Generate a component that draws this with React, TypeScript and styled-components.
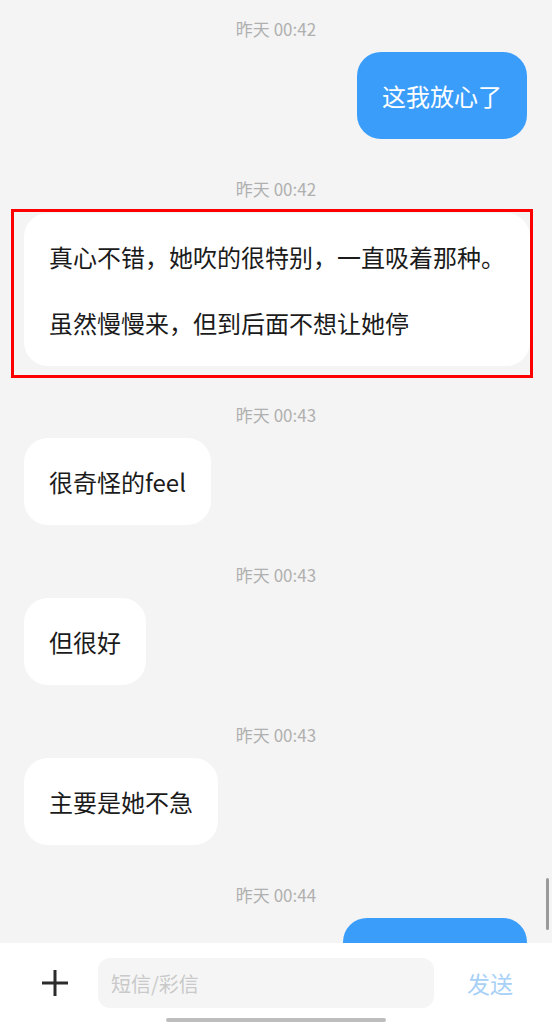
import React from "react";
import styled, { createGlobalStyle } from "styled-components";

const GlobalStyle = createGlobalStyle`
  html, body {
    margin: 0;
    padding: 0;
    background: #f4f4f4;
  }
  body {
    font-family: "Noto Sans CJK SC", "Noto Sans", sans-serif;
  }
  * { box-sizing: border-box; }
`;

const Page = styled.div`
  width: 552px;
  height: 1024px;
  display: flex;
  flex-direction: column;
  background: #f4f4f4;
  overflow: hidden;
`;

const ChatArea = styled.div`
  position: relative;
  flex: 1;
  overflow: hidden;
  display: flex;
  flex-direction: column;
  padding-top: 17px;
`;

const Group = styled.div<{ $first?: boolean }>`
  display: flex;
  flex-direction: column;
  flex-shrink: 0;
  margin-top: ${(p) => (p.$first ? "0" : "38px")};
`;

const Timestamp = styled.div`
  height: 24px;
  line-height: 24px;
  text-align: center;
  font-size: 17px;
  color: #b0b0b0;
  font-family: "Noto Sans CJK SC", "Noto Sans", sans-serif;
`;

const Row = styled.div<{ $out?: boolean }>`
  display: flex;
  justify-content: ${(p) => (p.$out ? "flex-end" : "flex-start")};
  margin-top: 11px;
  padding: 0 25px 0 24px;
`;

const Bubble = styled.div<{ $out?: boolean; $minWidth?: number }>`
  background: ${(p) => (p.$out ? "#3b9dfa" : "#ffffff")};
  color: ${(p) => (p.$out ? "#ffffff" : "#1b1b1b")};
  border-radius: 24px;
  padding: 27px 25px 27px;
  min-width: ${(p) => (p.$minWidth ? `${p.$minWidth}px` : "0")};
  min-height: 87px;
  font-size: 24px;
  line-height: 33px;
  white-space: pre;
  font-family: "Noto Sans CJK SC", "Noto Sans", sans-serif;
`;

const Highlight = styled.div`
  display: flex;
  margin: 8px 19px -13px 11px;
  padding: 1px 0 9px 10px;
  border: 3px solid #ff0000;
`;

const Scrollbar = styled.div`
  position: absolute;
  right: 3px;
  top: 878px;
  width: 3px;
  height: 52px;
  border-radius: 2px;
  background: #9a9a9a;
`;

const BottomBar = styled.div`
  height: 81px;
  flex-shrink: 0;
  background: #ffffff;
  display: flex;
  flex-direction: column;
  align-items: center;
  padding-top: 15px;
`;

const InputRow = styled.div`
  width: 100%;
  height: 50px;
  display: flex;
  align-items: center;
  padding-left: 41px;
`;

const PlusButton = styled.div`
  width: 28px;
  height: 28px;
  display: flex;
  align-items: center;
  justify-content: center;
`;

const InputBox = styled.div`
  margin-left: 29px;
  width: 336px;
  height: 50px;
  border-radius: 12px;
  background: #f5f5f5;
  display: flex;
  align-items: center;
  padding-left: 13px;
  font-size: 20px;
  color: #c9c9c9;
`;

const SendButton = styled.div`
  margin-left: 33px;
  font-size: 23px;
  color: #a8d1f7;
`;

const HomeIndicator = styled.div`
  margin-top: 10px;
  width: 220px;
  height: 4px;
  border-radius: 2px;
  background: #bdbdbd;
`;

type Msg = {
  time: string;
  text: string;
  out?: boolean;
  highlight?: boolean;
  minWidth?: number;
};

const messages: Msg[] = [
  { time: "昨天 00:42", text: "这我放心了", out: true },
  {
    time: "昨天 00:42",
    text: "真心不错，她吹的很特别，一直吸着那种。\n\n虽然慢慢来，但到后面不想让她停",
    highlight: true,
  },
  { time: "昨天 00:43", text: "很奇怪的feel" },
  { time: "昨天 00:43", text: "但很好" },
  { time: "昨天 00:43", text: "主要是她不急" },
  { time: "昨天 00:44", text: "", out: true, minWidth: 184 },
];

export default function App() {
  return (
    <Page>
      <GlobalStyle />
      <ChatArea>
        {messages.map((m, i) => (
          <Group key={i} $first={i === 0}>
            <Timestamp>{m.time}</Timestamp>
            {m.highlight ? (
              <Highlight>
                <Bubble $out={m.out}>{m.text}</Bubble>
              </Highlight>
            ) : (
              <Row $out={m.out}>
                <Bubble $out={m.out} $minWidth={m.minWidth}>
                  {m.text}
                </Bubble>
              </Row>
            )}
          </Group>
        ))}
        <Scrollbar />
      </ChatArea>
      <BottomBar>
        <InputRow>
          <PlusButton>
            <svg width="28" height="28" viewBox="0 0 28 28">
              <path d="M14 1v26M1 14h26" stroke="#2b2b2b" strokeWidth="3" fill="none" />
            </svg>
          </PlusButton>
          <InputBox>短信/彩信</InputBox>
          <SendButton>发送</SendButton>
        </InputRow>
        <HomeIndicator />
      </BottomBar>
    </Page>
  );
}
